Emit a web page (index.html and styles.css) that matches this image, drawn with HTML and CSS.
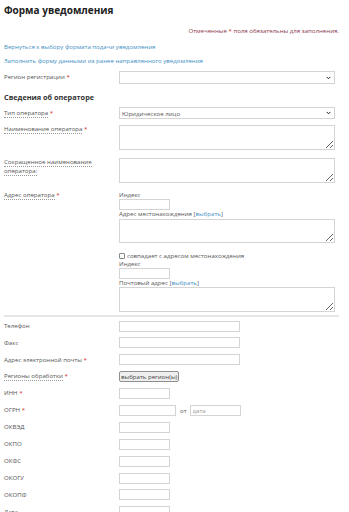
FILE: index.html
```html
<!DOCTYPE html>
<html lang="ru">
<head>
<meta charset="utf-8">
<link rel="stylesheet" href="styles.css">
</head>
<body>
<div class="page">
  <h1 class="title">Форма уведомления</h1>
  <p class="note">Отмеченные <span class="req">*</span> поля обязательны для заполнения.</p>
  <a class="link link-first">Вернуться к выбору формата подачи уведомления</a>
  <a class="link link-second">Заполнить форму данными из ранее направленного уведомления</a>

  <div class="row row-region">
    <div class="lbl">Регион регистрации <span class="req">*</span></div>
    <div class="select select-tall"><span class="sel-text"></span><svg class="chev" viewBox="0 0 8 6" width="5" height="4"><path d="M1 1.2 L4 4.2 L7 1.2" fill="none" stroke="#222" stroke-width="1.6"/></svg></div>
  </div>

  <h2 class="section">Сведения об операторе</h2>

  <div class="row row-type">
    <div class="lbl"><span class="dot">Тип оператора</span> <span class="req">*</span></div>
    <div class="select"><span class="sel-text">Юридическое лицо</span><svg class="chev" viewBox="0 0 8 6" width="5" height="4"><path d="M1 1.2 L4 4.2 L7 1.2" fill="none" stroke="#222" stroke-width="1.6"/></svg></div>
  </div>

  <div class="row row-top row-name">
    <div class="lbl lbl-top"><span class="dot">Наименование оператора</span> <span class="req">*</span></div>
    <textarea class="ta ta-25"></textarea>
  </div>

  <div class="row row-top row-short">
    <div class="lbl lbl-top lbl-short"><span class="dot">Сокращенное наименование оператора:</span></div>
    <textarea class="ta ta-25"></textarea>
  </div>

  <div class="row row-top row-address">
    <div class="lbl lbl-top"><span class="dot">Адрес оператора</span> <span class="req">*</span></div>
    <div class="addr">
      <div class="sub">Индекс</div>
      <input class="inp w50 sub-inp" type="text">
      <div class="sub">Адрес местонахождения [<a class="pick">выбрать</a>]</div>
      <textarea class="ta ta-24 sub-ta"></textarea>
      <div class="sub check-line"><span class="cbox"></span> совпадает с адресом местонахождения</div>
      <div class="sub">Индекс</div>
      <input class="inp w50" type="text">
      <div class="sub">Почтовый адрес [<a class="pick">выбрать</a>]</div>
      <textarea class="ta ta-25"></textarea>
    </div>
  </div>

  <hr class="divider">

  <div class="simple">
    <div class="row"><div class="lbl">Телефон</div><input class="inp w120" type="text"></div>
    <div class="row"><div class="lbl">Факс</div><input class="inp w120" type="text"></div>
    <div class="row"><div class="lbl">Адрес электронной почты <span class="req">*</span></div><input class="inp w120" type="text"></div>
    <div class="row"><div class="lbl"><span class="dot">Регионы обработки</span> <span class="req">*</span></div><div><button class="btn" type="button">выбрать регион(ы)</button></div></div>
    <div class="row"><div class="lbl">ИНН <span class="req">*</span></div><input class="inp w50" type="text"></div>
    <div class="row"><div class="lbl">ОГРН <span class="req">*</span></div><div class="ogrn"><input class="inp w57" type="text"><span class="ot">от</span><input class="inp w50" type="text" placeholder="дата"></div></div>
    <div class="row"><div class="lbl">ОКВЭД</div><input class="inp w50" type="text"></div>
    <div class="row"><div class="lbl">ОКПО</div><input class="inp w50" type="text"></div>
    <div class="row"><div class="lbl">ОКФС</div><input class="inp w50" type="text"></div>
    <div class="row"><div class="lbl">ОКОГУ</div><input class="inp w50" type="text"></div>
    <div class="row"><div class="lbl">ОКОПФ</div><input class="inp w50" type="text"></div>
    <div class="row row-last"><div class="lbl">Дата</div><input class="inp w50" type="text"></div>
  </div>
</div>
</body>
</html>
```

FILE: styles.css
```css
* { box-sizing: border-box; }
html, body { margin: 0; padding: 0; background: #fff; }
body {
  font-family: "Open Sans", "Noto Sans", sans-serif;
  font-size: 6.1px;
  color: #555;
  overflow: hidden;
}
.page {
  width: 349px;
  padding: 3px 10px 0 4px;
}
.title {
  margin: 0;
  font-size: 10px;
  line-height: 14px;
  font-weight: 700;
  color: #222;
}
.note {
  margin: 8.5px 0 0;
  text-align: right;
  line-height: 9px;
  color: #8a3a4c;
}
.req { color: #d42a2a; }
.link {
  display: block;
  line-height: 9px;
  color: #3f8fc4;
}
.link-first { margin-top: 7px; }
.link-second { margin-top: 5px; }

.row {
  display: grid;
  grid-template-columns: 115px 216px;
  align-items: center;
}
.row-top { align-items: start; }
.row-region { margin-top: 6.5px; }
.row-type { margin-top: 5px; }
.row-name { margin-top: 6px; }
.row-short { margin-top: 8px; }
.row-address { margin-top: 8px; }

.lbl { line-height: 8.5px; }
.lbl-top { padding-right: 8px; }
.lbl-short { padding-right: 20px; }
.dot { border-bottom: 1px dotted #999; }

.section {
  margin: 8px 0 0;
  font-size: 7.3px;
  line-height: 10px;
  font-weight: 700;
  color: #333;
}

.select {
  height: 12px;
  border: 1px solid #d4d4d4;
  display: flex;
  align-items: center;
  justify-content: space-between;
  padding: 0 3px 0 2px;
  color: #555;
  background: #fff;
}
.select-tall { height: 13px; }
.chev { display: block; }

.ta {
  display: block;
  width: 216px;
  border: 1px solid #d4d4d4;
  margin: 0;
  padding: 0;
  font: inherit;
  background: #fff;
}
.ta-25 { height: 25px; }
.ta-24 { height: 24px; }

.addr { display: flex; flex-direction: column; }
.sub { line-height: 8px; }
.sub-inp { margin-top: 1px; margin-bottom: 0; }
.sub-ta { margin-top: 1px; }
.check-line {
  margin-top: 8.5px;
  display: flex;
  align-items: center;
  gap: 2px;
}
.cbox {
  display: inline-block;
  width: 6px;
  height: 6px;
  border: 1px solid #888;
  border-radius: 1px;
  background: #fff;
}
.pick { color: #3f8fc4; }

.inp {
  display: block;
  height: 11px;
  margin: 0;
  padding: 0 2px;
  border: 1px solid #d4d4d4;
  font: inherit;
  color: #555;
  background: #fff;
  outline: none;
}
.inp::placeholder { color: #999; }
.w50 { width: 51px; }
.w57 { width: 57px; }
.w120 { width: 121px; }

.divider {
  margin: 3px 0 0;
  border: 0;
  border-top: 2px solid #e6e6e6;
  height: 0;
}

.simple {
  display: flex;
  flex-direction: column;
  gap: 5.9px;
  margin-top: 4px;
}
.btn {
  display: block;
  height: 11px;
  margin: 0;
  padding: 0 1px;
  font: inherit;
  color: #444;
  background: #efefef;
  border: 1px solid #8f8f8f;
  border-radius: 2px;
  line-height: 8px;
}
.ogrn { display: flex; align-items: center; }
.ot { margin: 0 3px 0 4px; }
```
